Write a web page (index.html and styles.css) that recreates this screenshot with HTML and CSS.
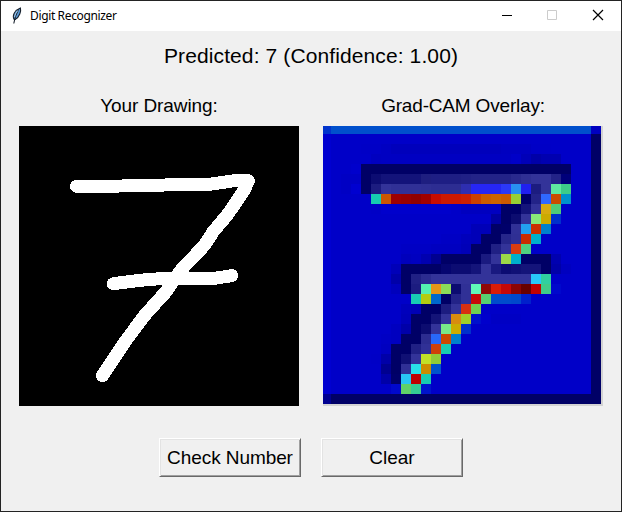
FILE: index.html
```html
<!DOCTYPE html>
<html lang="en">
<head>
<meta charset="utf-8">
<title>Digit Recognizer</title>
<link rel="stylesheet" href="styles.css">
</head>
<body>
<div class="window">
  <header class="titlebar">
    <svg class="feather" width="16" height="18" viewBox="0 0 16 18">
      <path d="M5.200 12.500C3 9 5.400 3.200 11.400 1c.9 3.400-.9 8.800-5 11.400z" fill="#5b9bd8" stroke="#17202c" stroke-width="1.100"/>
      <path d="M9.800 2.500C7.500 6 6 10 4.800 16.500" fill="none" stroke="#17202c" stroke-width="1.100"/>
      <path d="M9 3.500C7 5.500 5.800 8 5.700 10" fill="none" stroke="#b9d9f4" stroke-width=".9"/>
    </svg>
    <span class="title">Digit Recognizer</span>
    <div class="controls">
      <svg width="46" height="30" viewBox="0 0 46 30"><path d="M17 14.500h10" stroke="#000"/></svg>
      <svg width="46" height="30" viewBox="0 0 46 30"><path d="M16.500 9.500h9v9h-9z" fill="none" stroke="#ccc"/></svg>
      <svg width="46" height="30" viewBox="0 0 46 30"><path d="M16 9l10 10M26 9L16 19" stroke="#000" stroke-width="1.200"/></svg>
    </div>
  </header>
  <main class="content">
    <div class="result"><span>Predicted: 7 (Confidence: 1.00)</span></div>
    <div class="panels">
      <section class="panel">
        <h2><span class="drawing-label">Your Drawing:</span></h2>
        <svg class="drawing" viewBox="0 0 280 280" shape-rendering="crispEdges">
          <path d="M57.500 60.300L102.700 60L146 59L191 58.300L213 55L229.300 54.700L225 64.500L208.300 89L194.300 105.500L185.700 119L162 144L147 165.700L126 189L106 215.700L83.300 249.700"/>
          <path d="M94.300 157.700L121 154.300L141 152.700L192.700 152.700L212.700 149.700"/>
        </svg>
      </section>
      <section class="panel">
        <h2><span class="overlay-label">Grad-CAM Overlay:</span></h2>
        <div class="overlay"><svg id="heatmap" viewBox="2 2 278 278" shape-rendering="crispEdges"></svg></div>
      </section>
    </div>
    <div class="actions">
      <button type="button"><span class="check">Check Number</span></button>
      <button type="button"><span>Clear</span></button>
    </div>
  </main>
</div>
<script src="heatmap.js"></script>
</body>
</html>
```
FILE: styles.css
```css
* { box-sizing: border-box; }
body { margin: 0; }
.window {
  width: 622px;
  height: 512px;
  border: 1px solid #232323;
  background: #f0f0f0;
  color: #000;
  font-family: "Liberation Sans", Arial, sans-serif;
  overflow: hidden;
}
.titlebar {
  display: flex;
  align-items: center;
  height: 30px;
  padding-left: 8px;
  background: #fff;
}
.feather { flex: none; }
.title {
  margin-left: 5px;
  font: 12px/16px "Segoe UI", "Noto Sans", sans-serif;
  letter-spacing: -0.36px;
  white-space: nowrap;
}
.controls { display: flex; margin-left: auto; margin-right: -2px; }
.content { display: flex; flex-direction: column; }
.result {
  height: 50px;
  text-align: center;
  font-size: 21px;
  letter-spacing: 0.11px;
  line-height: 50px;
  white-space: nowrap;
}
.panels { display: flex; gap: 24px; padding-left: 18px; }
.panel { width: 280px; }
h2 {
  height: 45px;
  margin: 0;
  text-align: center;
  font-size: 19px;
  font-weight: 400;
  line-height: 49px;
  white-space: nowrap;
}
.drawing-label { letter-spacing: -0.08px; }
.overlay-label { letter-spacing: -0.18px; }
.drawing { display: block; width: 280px; height: 280px; background: #000; }
.drawing path {
  fill: none;
  stroke: #fff;
  stroke-width: 13;
  stroke-linecap: round;
  stroke-linejoin: round;
}
.overlay { width: 280px; height: 280px; background: #d3d3d3; }
.overlay svg { display: block; width: 278px; height: 278px; }
.actions { display: flex; gap: 20px; padding: 32px 0 0 158px; }
button {
  width: 142px;
  height: 39px;
  padding: 0;
  border: 1px solid;
  border-color: #fff #696969 #696969 #fff;
  box-shadow: inset 1px 1px #e3e3e3, inset -1px -1px #a0a0a0;
  background: #f0f0f0;
  color: #000;
  font: 19px/37px "Liberation Sans", Arial, sans-serif;
  white-space: nowrap;
}
.check { letter-spacing: -0.08px; }
```
FILE: heatmap.js
```js
// Runs of cells on a 28 x 28 grid: row, first column, colours ("hex*n" repeats a colour).
const D = "000066", P = "333399";
const runs = [
  [0, 0, "0034cc", "0050cc*26", "0000c0"],
  [1, 21, "0000c8*2"],
  [2, 4, "0000c6*2", "0000c2", "0000bc*11", "0000c0*3", "0000c6*2"],
  [3, 4, "0000c8", "0000c0", "0000c2*13", "0000c8", "0000b8", "0000a8", "0000b0*2"],
  [4, 2, "0000c8", "0000cc", D + "*21"],
  [5, 2, "0000c4", "0000c4", D, "0c0c72", "13137a*4", "1e1e80", "1e1e84*3", "202086", "232388*4", "29298e", "2f2f94", P + "*2", "232388", "00007a"],
  [6, 2, "0000c4", "0000d0", D, "1c1c80", P, "303096*3", "2f2f94", "2d2d92*3", "2e2eb0", "2626f5*3", "2b38f8", "2890f0", "2020f0", "1c1c80", P, "5fe8a0", "3dcc88"],
  [7, 5, "16ccb0", "cc5600", "9e0000", "980000", "900000", "a00000", "c80c00", "cc1900*2", "cc2000", "cc4000", "cc5c00", "cc6400", "cc5a00", "98d034", "000068", "232388", "2f68ff", "cc4c00", "0090cc"],
  [8, 5, "0000c6", "0000cc*7", "0000c8", "0000c0*4", D + "*2", "14147a", P, "d8aa10", "50cc78"],
  [9, 7, "0000c8*10", "0000a0", D, "0c0c70", P, "88e878", "ccaa00", "0030cc"],
  [10, 15, "0000b8*2", D, "00006a", "303096", "22a0f0", "cc3000", "0080cc"],
  [11, 11, "0000c8", "0000c4*2", "0000bc", "0000b8", D + "*2", "26268a", "2f2f94", "cc2c00", "00b0cc"],
  [12, 8, "0000c4*3", "0000c0*3", "0000b8", D + "*2", "202084", P, "d83c10", "50d080"],
  [13, 8, "0000bc", "0000c0", "0000b0", "000090", D + "*4", "1a1a80", P, "9cd848", "00b0cc", D + "*3", "0000b0"],
  [14, 7, "0000b8", D + "*4", "050570", "0c0c72*2", "14147a", P, "191980", "0c0c72", "101076", "14147a*2", D, "0000a8", "0000c0"],
  [15, 6, "0000c8", "0000a8", D, "202084", "2b2b90", P + "*10", "28c8f8", "30d0a0", "0000c8"],
  [16, 7, "0000bc", D, "1c1c80", "54f0b0", "e49618", "8cdc58", "0c0c70", "303096", "60f8b8", "900808", "d81c08", "c40808", "8c0404", "680000", "c00000", "40cc88", "0008cc"],
  [17, 9, "18ccb4", "b4cc10", "0068cc", D, "232388", "303096", "c80808", "58d070", "004ccc*2", "0048cc", "0020cc"],
  [18, 8, "0000bc", "0000b4", D + "*2", "1c1c80", P, "d83010", "70d050"],
  [19, 8, "0000b8", D + "*2", "141478", P, "d88c10", "a0d028", "0010cc", "0000cc", "0000c4*3"],
  [20, 7, "0000c0", "0000a8", D, "0c0c70", P, "78e888", "ccac00", "0030cc"],
  [21, 6, "0000c4", "0000c0", D + "*2", "2c2c90", "2868f8", "cc4800", "0080cc"],
  [22, 5, "0000c8", "0000c0", D + "*2", "202084", "303096", "d04008", "18ccb0"],
  [23, 5, "0000c6", "0000a8", D, "101074", P, "c0e028", "90cc38"],
  [24, 4, "0000c8*2", "000090", D, "303096", "28e0e8", "cc8c00", "0054cc"],
  [25, 6, "0000a8", "00006a", "28c4f4", "c00000", "18ccb0"],
  [26, 7, "0008cc", "60d068", "34cc94", "0014cc"],
  [27, 0, "000090", D + "*26"]
];
const svg = document.getElementById("heatmap");
function cell(x, y, w, h, colour) {
  const r = document.createElementNS("http://www.w3.org/2000/svg", "rect");
  r.setAttribute("x", x * 10);
  r.setAttribute("y", y * 10);
  r.setAttribute("width", w * 10);
  r.setAttribute("height", h * 10);
  r.setAttribute("fill", "#" + colour);
  svg.appendChild(r);
}
cell(0, 0, 28, 28, "0000c8");
cell(0, 1, 1, 26, "0000d0");
cell(27, 1, 1, 27, D);
for (const [row, start, ...colours] of runs) {
  let x = start;
  for (const item of colours) {
    const [colour, n = 1] = item.split("*");
    cell(x, row, +n, 1, colour);
    x += +n;
  }
}
```
